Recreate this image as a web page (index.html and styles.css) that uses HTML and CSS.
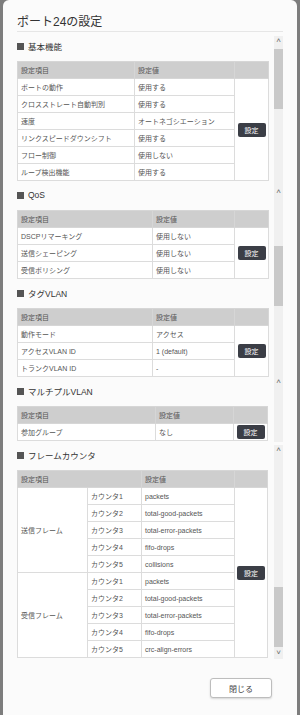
FILE: index.html
```html
<!DOCTYPE html>
<html lang="ja">
<head>
  <meta charset="UTF-8" />
  <meta name="viewport" content="width=device-width, initial-scale=1" />
  <title>ポート24の設定</title>
  <link rel="stylesheet" href="styles.css">
</head>
<body>

  <div class="modal">
    <h1 class="modal-title">ポート24の設定</h1>

    <div class="modal-body">
      <div class="sections">

        <!-- 基本機能 -->
        <h2 class="sec-title"><span class="sq"></span>基本機能</h2>
        <table class="conf">
          <colgroup><col class="c117"><col><col class="c34"></colgroup>
          <tr class="head"><th>設定項目</th><th>設定値</th><th></th></tr>
          <tr><td>ポートの動作</td><td>使用する</td><td class="act" rowspan="6"><button class="btn-set">設定</button></td></tr>
          <tr><td>クロスストレート自動判別</td><td>使用する</td></tr>
          <tr><td>速度</td><td>オートネゴシエーション</td></tr>
          <tr><td>リンクスピードダウンシフト</td><td>使用する</td></tr>
          <tr><td>フロー制御</td><td>使用しない</td></tr>
          <tr><td>ループ検出機能</td><td>使用する</td></tr>
        </table>

        <!-- QoS -->
        <h2 class="sec-title"><span class="sq"></span>QoS</h2>
        <table class="conf">
          <colgroup><col class="c135"><col><col class="c34"></colgroup>
          <tr class="head"><th>設定項目</th><th>設定値</th><th></th></tr>
          <tr><td>DSCPリマーキング</td><td>使用しない</td><td class="act" rowspan="3"><button class="btn-set">設定</button></td></tr>
          <tr><td>送信シェーピング</td><td>使用しない</td></tr>
          <tr><td>受信ポリシング</td><td>使用しない</td></tr>
        </table>

        <!-- タグVLAN -->
        <h2 class="sec-title"><span class="sq"></span>タグVLAN</h2>
        <table class="conf">
          <colgroup><col class="c135"><col><col class="c34"></colgroup>
          <tr class="head"><th>設定項目</th><th>設定値</th><th></th></tr>
          <tr><td>動作モード</td><td>アクセス</td><td class="act" rowspan="3"><button class="btn-set">設定</button></td></tr>
          <tr><td>アクセスVLAN ID</td><td>1 (default)</td></tr>
          <tr><td>トランクVLAN ID</td><td>-</td></tr>
        </table>

        <!-- マルチプルVLAN -->
        <h2 class="sec-title"><span class="sq"></span>マルチプルVLAN</h2>
        <table class="conf narrow">
          <colgroup><col class="c138"><col><col class="c34"></colgroup>
          <tr class="head"><th>設定項目</th><th>設定値</th><th></th></tr>
          <tr><td>参加グループ</td><td>なし</td><td class="act"><button class="btn-set">設定</button></td></tr>
        </table>

        <!-- フレームカウンタ -->
        <h2 class="sec-title"><span class="sq"></span>フレームカウンタ</h2>
        <table class="conf narrow">
          <colgroup><col class="c70"><col class="c54"><col><col class="c33"></colgroup>
          <tr class="head"><th colspan="2">設定項目</th><th>設定値</th><th></th></tr>
          <tr><td rowspan="5">送信フレーム</td><td>カウンタ1</td><td>packets</td><td class="act" rowspan="10"><button class="btn-set">設定</button></td></tr>
          <tr><td>カウンタ2</td><td>total-good-packets</td></tr>
          <tr><td>カウンタ3</td><td>total-error-packets</td></tr>
          <tr><td>カウンタ4</td><td>fifo-drops</td></tr>
          <tr><td>カウンタ5</td><td>collisions</td></tr>
          <tr><td rowspan="5">受信フレーム</td><td>カウンタ1</td><td>packets</td></tr>
          <tr><td>カウンタ2</td><td>total-good-packets</td></tr>
          <tr><td>カウンタ3</td><td>total-error-packets</td></tr>
          <tr><td>カウンタ4</td><td>fifo-drops</td></tr>
          <tr><td>カウンタ5</td><td>crc-align-errors</td></tr>
        </table>
      </div>

      <!-- scrollbar strip -->
      <div class="rail">
        <div class="arrow h10">&#x02C4;</div>
        <div class="h3"></div>
        <div class="thumb"></div>
        <div class="h78"></div>
        <div class="arrow h10">&#x02C4;</div>
        <div class="h49"></div>
        <div class="thumb"></div>
        <div class="h71"></div>
        <div class="arrow h10">&#x02C4;</div>
        <div class="h55"></div>
        <div class="gap"></div>
        <div class="arrow h10">&#x02C4;</div>
        <div class="h132"></div>
        <div class="thumb"></div>
        <div class="arrow down">&#x02C5;</div>
      </div>
    </div>

    <div class="modal-foot">
      <button class="btn-close">閉じる</button>
    </div>
  </div>

</body>
</html>
```

FILE: styles.css
```css
body {
  margin: 0;
  background: #7d7d7d;
  font-family: "Liberation Sans", "Noto Sans CJK JP", sans-serif;
  color: #555;
}

.modal {
  margin-left: 3px;
  width: 294px;
  height: 715px;
  box-sizing: border-box;
  padding: 0 14px;
  background: #fbfbfb;
  border-radius: 6px 6px 0 0;
}

.modal-title {
  margin: 0;
  padding: 14px 0 1px;
  font-size: 12px;
  line-height: 16px;
  font-weight: normal;
  color: #333;
  border-bottom: 1px solid #e6e6e6;
}

.modal-body {
  display: grid;
  grid-template-columns: 1fr 9px;
  column-gap: 5px;
  align-items: start;
  margin-top: 4px;
}

.sections {
  padding-top: 3px;
}

.sec-title {
  display: flex;
  align-items: center;
  gap: 4px;
  margin: 0 0 8px;
  height: 14px;
  font-size: 8.5px;
  font-weight: normal;
  color: #333;
}

.sq {
  width: 7px;
  height: 7px;
  background: #555;
}

/* settings tables */
.conf {
  width: 100%;
  border-collapse: collapse;
  table-layout: fixed;
  margin-bottom: 7px;
  font-size: 7px;
  background: #fff;
}

.conf.narrow {
  width: 251px;
}

.conf th,
.conf td {
  height: 16px;
  padding: 0 3px;
  border: 1px solid #dcdcdc;
  text-align: left;
  white-space: nowrap;
  overflow: hidden;
}

.conf .head th {
  background: #cecece;
  font-weight: normal;
  color: #555;
  border-color: #d6d6d6;
}

.conf td.act {
  padding: 0 2px;
  text-align: center;
}

.c117 { width: 117px; }
.c135 { width: 135px; }
.c138 { width: 138px; }
.c70 { width: 70px; }
.c54 { width: 54px; }
.c34 { width: 34px; }
.c33 { width: 33px; }

.btn-set {
  width: 28px;
  height: 14px;
  padding: 0;
  border: none;
  border-radius: 2px;
  background: #3b3e46;
  color: #fff;
  font-family: inherit;
  font-size: 7px;
}

/* scrollbar strip */
.rail {
  display: flex;
  flex-direction: column;
  background: #f0f0f0;
}

.rail .arrow {
  display: flex;
  align-items: center;
  justify-content: center;
  font-size: 8px;
  color: #666;
  line-height: 1;
}

.rail .down {
  height: 12px;
}

.rail .thumb {
  height: 60px;
  background: #c9c9c9;
}

.rail .gap {
  height: 3px;
  background: #fbfbfb;
}

.h3 { height: 3px; }
.h10 { height: 10px; }
.h49 { height: 49px; }
.h55 { height: 55px; }
.h71 { height: 71px; }
.h78 { height: 78px; }
.h132 { height: 132px; }

.modal-foot {
  display: flex;
  justify-content: flex-end;
  padding: 13px 11px 0 0;
}

.btn-close {
  width: 62px;
  height: 20px;
  padding: 0;
  border: 1px solid #bdbdbd;
  border-radius: 3px;
  background: #fff;
  box-shadow: 0 1px 2px rgba(0,0,0,0.15);
  color: #444;
  font-family: inherit;
  font-size: 8px;
}
```
